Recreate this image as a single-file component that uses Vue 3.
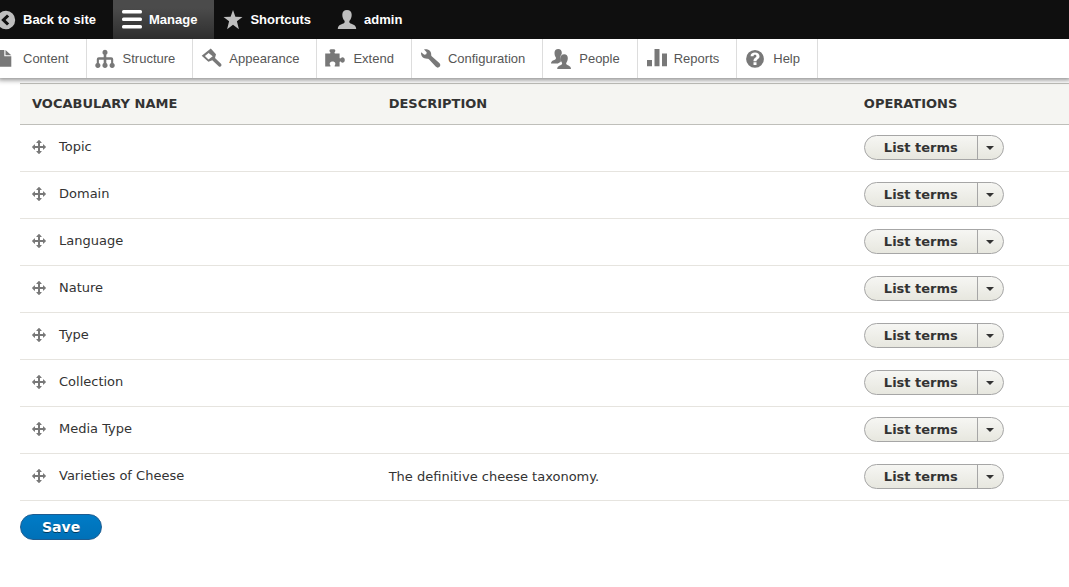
<script setup>
const bar = [
  { label: 'Back to site', icon: 'back' },
  { label: 'Manage', icon: 'menu', active: true },
  { label: 'Shortcuts', icon: 'star' },
  { label: 'admin', icon: 'person' }
]

const tray = [
  { label: 'Content', icon: 'file' },
  { label: 'Structure', icon: 'tree' },
  { label: 'Appearance', icon: 'brush' },
  { label: 'Extend', icon: 'puzzle' },
  { label: 'Configuration', icon: 'wrench' },
  { label: 'People', icon: 'people' },
  { label: 'Reports', icon: 'chart' },
  { label: 'Help', icon: 'help' }
]

const icons = {
  back: 'M10 .8a9.2 9.2 0 1 0 0 18.4a9.2 9.2 0 1 0 0-18.4zM11 4.4l2.2 2.2L9.6 10l3.6 3.4-2.2 2.2L5.2 10z',
  menu: 'M1.5 0h17a1.5 1.5 0 0 1 1.5 1.5v.6a1.5 1.5 0 0 1-1.5 1.5h-17A1.5 1.5 0 0 1 0 2.1v-.6A1.5 1.5 0 0 1 1.5 0zM1.5 7.5h17a1.5 1.5 0 0 1 1.5 1.5v.6a1.5 1.5 0 0 1-1.5 1.5h-17A1.5 1.5 0 0 1 0 9.6V9a1.5 1.5 0 0 1 1.5-1.5zM1.5 15h17a1.5 1.5 0 0 1 1.5 1.5v.6a1.5 1.5 0 0 1-1.5 1.5h-17A1.5 1.5 0 0 1 0 17.1v-.6A1.5 1.5 0 0 1 1.5 15z',
  star: 'M10 0l2.4 6.7 7.1.2-5.6 4.4 2 7.9-5.9-4.4-5.9 4.4 2-7.9L.5 6.900l7.100-.2z',
  person: 'M10 0c3 0 4.700 2 4.700 4.800 0 2.300-.8 4.400-2 5.800-.5.7-.6 1.800.2 2.500 1.300 1.200 6.300 1.400 6.300 5.900H.8c0-4.500 5-4.700 6.300-5.900.8-.7.7-1.800.2-2.500-1.200-1.400-2-3.500-2-5.800C5.300 2 7 0 10 0z',
  file: 'M3 1h6.300v6.200h7v10.600H3zM10.500 1l5.800 5.200h-5.800z',
  tree: 'M10 .8a2.700 2.700 0 0 1 1.300 5v2.500h4.900a2 2 0 0 1 2 2v3.800a2.600 2.600 0 1 1-2.100 0v-3.400h-4.800v3.400a2.600 2.600 0 1 1-2.600 0v-3.400H3.900v3.400a2.600 2.600 0 1 1-2.100 0v-3.800a2 2 0 0 1 2-2h4.900V5.800A2.700 2.700 0 0 1 10 .8z',
  brush: 'M9.800-.4l5.200 5.600-1 3.700 6 5.900c1.200 1.300.1 3.300-1.800 2.900L11.300 11.200l-3.900 1.500L.7 6.700zM7.600 3.900L3.900 6.900l3.600 3.500 4.200-3.200z',
  puzzle: 'M.2 4.400h4.600c.8 0 .9-.9.2-1.400C4 1.900 4.400.2 6 .2h2.800c1.700 0 2 1.700 1 2.800-.6.6-.4 1.400.4 1.400h4.400v4.300c0 .9.8 1 1.400.3 1.200-1.300 3.800-.7 3.800 2s-2.600 3.300-3.800 2c-.6-.7-1.400-.5-1.400.3v4.300h-4.300c-.8 0-.9-.8-.4-1.400 1.100-1.300.3-3.600-2.300-3.600s-3.600 2.300-2.400 3.600c.6.6.4 1.400-.5 1.400H.2z',
  wrench: 'M1.100 3.300l3.200 2.500 2-.5.400-2L4 .5C7.600-.8 11.500 1.700 11.200 5.500c-.1.700 0 1.200.5 1.700l7.600 6.900c1.300 1.300 1.300 2.600.3 3.700-1.100 1.100-2.600 1.100-3.700 0l-7-7.500c-.5-.5-1.100-.5-1.800-.5C3.300 9.800.5 7 1.100 3.300z',
  people: 'M7.200 0c2.300 0 3.600 1.400 3.600 3.700 0 .7-.1 1.200-.4 1.800-1 1.100-1.300 2.800-.9 4.700.2 1.100.6 1.800.2 2.500-.5.7-1.700 1-2.800 1.800H0c.1-3.200 3.500-3.300 4.600-4.300.6-.6.4-1.500 0-2.100C3.900 7 3.500 5.500 3.500 3.700 3.500 1.400 4.900 0 7.200 0zM13.200 5.200c2.300 0 3.600 1.500 3.600 3.700 0 1.800-.5 3.400-1.300 4.500-.4.5-.5 1.500.1 2 1.200 1.100 4.400 1.100 4.400 4.600H6.200c0-3.500 3.300-3.500 4.500-4.600.6-.5.5-1.500.1-2-.8-1.100-1.300-2.700-1.300-4.500 0-2.200 1.400-3.700 3.700-3.700z',
  chart: 'M1 11h5v6.300H1zM8.500 0h5v17.300h-5zM16 4.500h5v12.800h-5z',
  help: 'M10 1a8.900 8.900 0 1 0 0 17.800A8.900 8.900 0 1 0 10 1zM8.500 13.200h3v2.700h-3zM5.600 7.300C5.600 4.700 7.300 3.500 10 3.500s4.500 1.400 4.500 3.700c0 2.900-3 2.900-3 5h-3c0-3.500 2.900-3.500 2.900-5 0-1-.6-1.400-1.400-1.400S8.500 6.300 8.500 7.300z'
}

const move = 'M14.904 7.753l-2.373-2.372c-.291-.292-.529-.193-.529.22v1.399h-3v-3h1.398c.413 0 .512-.239.220-.529l-2.372-2.373c-.137-.136-.36-.136-.495 0l-2.372 2.373c-.292.29-.193.529.220.529h1.398v3h-3v-1.369c0-.413-.239-.511-.529-.22l-2.372 2.372c-.136.136-.136.359 0 .494l2.372 2.372c.291.292.529.193.529-.221v-1.428h3v3h-1.398c-.413 0-.512.239-.22.529l2.373 2.372c.136.137.359.137.495 0l2.372-2.372c.292-.29.193-.529-.22-.529h-1.398v-3h3v1.4c0 .413.238.511.529.22l2.373-2.372c.137-.136.137-.359 0-.495z'

const rows = [
  { name: 'Topic' },
  { name: 'Domain' },
  { name: 'Language' },
  { name: 'Nature' },
  { name: 'Type' },
  { name: 'Collection' },
  { name: 'Media Type' },
  { name: 'Varieties of Cheese', description: 'The definitive cheese taxonomy.' }
]
</script>

<template>
  <div class="page">
    <header class="toolbar">
      <nav class="bar" aria-label="Toolbar">
        <a v-for="item in bar" :key="item.label" href="#" :class="{ active: item.active }">
          <svg viewBox="0 0 20 20" aria-hidden="true"><path :d="icons[item.icon]" fill-rule="evenodd" /></svg>
          <span>{{ item.label }}</span>
        </a>
      </nav>
      <nav class="tray" aria-label="Administration">
        <a v-for="item in tray" :key="item.label" href="#">
          <svg viewBox="0 0 20 20" aria-hidden="true"><path :d="icons[item.icon]" fill-rule="evenodd" /></svg>
          <span>{{ item.label }}</span>
        </a>
      </nav>
    </header>

    <main>
      <form @submit.prevent>
        <table>
          <colgroup>
            <col class="col-name" />
            <col class="col-description" />
            <col />
          </colgroup>
          <thead>
            <tr>
              <th scope="col">VOCABULARY NAME</th>
              <th scope="col">DESCRIPTION</th>
              <th scope="col">OPERATIONS</th>
            </tr>
          </thead>
          <tbody>
            <tr v-for="row in rows" :key="row.name">
              <td>
                <div class="name">
                  <a href="#" class="handle" :aria-label="'Move ' + row.name">
                    <svg viewBox="0 0 16 16" aria-hidden="true"><path :d="move" /></svg>
                  </a>
                  <span>{{ row.name }}</span>
                </div>
              </td>
              <td>{{ row.description }}</td>
              <td>
                <div class="dropbutton">
                  <button type="button" class="action">List terms</button>
                  <button type="button" class="toggle" :aria-label="'More actions for ' + row.name">
                    <i></i>
                  </button>
                </div>
              </td>
            </tr>
          </tbody>
        </table>
        <button type="submit" class="save">Save</button>
      </form>
    </main>
  </div>
</template>

<style>
body {
  background: #fff;
}
</style>

<style scoped>
.page {
  overflow: hidden;
  color: #333;
  font: 13px/20px "DejaVu Sans", sans-serif;
}

.toolbar {
  position: relative;
  font-family: "Liberation Sans", Arial, sans-serif;
  line-height: 15px;
  box-shadow: 0 0 5px 2px rgba(0, 0, 0, 0.45);
}

.bar,
.tray {
  display: flex;
  height: 39px;
}

.bar {
  background: #0f0f0f;
}

.tray {
  background: #fff;
}

.bar a,
.tray a {
  display: flex;
  flex: none;
  align-items: center;
  color: #565656;
  text-decoration: none;
}

.bar a:first-child,
.tray a:first-child {
  margin-left: -13px;
}

.bar a {
  gap: 7px;
  padding: 0 17px 0 9px;
  color: #fff;
  font-weight: 700;
}

.bar a.active {
  background: linear-gradient(rgba(255, 255, 255, 0.25) 20%, rgba(255, 255, 255, 0.13));
}

.tray a {
  gap: 8px;
  padding: 0 17px 0 8px;
  border-right: 1px solid #ddd;
}

.bar svg,
.tray svg {
  width: 20px;
  height: 20px;
  overflow: visible;
}

.bar svg {
  fill: #bebebe;
}

.bar .active svg {
  fill: #fff;
}

.tray svg {
  fill: #787878;
}

main {
  padding: 5px 0 40px 20px;
}

table {
  width: 100%;
  table-layout: fixed;
  border-collapse: separate;
  border-spacing: 0;
}

.col-name {
  width: 34%;
}

.col-description {
  width: 45.3%;
}

th {
  height: 40px;
  padding: 0 12px;
  border-top: 1px solid #bfbfba;
  border-bottom: 1px solid #bfbfba;
  background: #f5f5f2;
  text-align: left;
  font-weight: 700;
}

td {
  height: 46px;
  padding: 0 12px;
  border-bottom: 1px solid #e6e4df;
}

.name {
  display: flex;
  align-items: center;
  gap: 12px;
  padding-bottom: 2px;
}

.handle {
  display: flex;
  margin-left: -1px;
}

.handle svg {
  width: 16px;
  height: 16px;
  fill: #787878;
}

.dropbutton {
  display: flex;
  width: 140px;
  height: 25px;
  box-sizing: border-box;
  margin-bottom: 1px;
  overflow: hidden;
  border: 1px solid #a6a6a6;
  border-radius: 13px;
  background: linear-gradient(#f6f6f3, #e7e7df);
}

.dropbutton button {
  padding: 0;
  border: 0;
  background: none;
  color: #333;
  font: 700 13px/23px "DejaVu Sans", sans-serif;
}

.dropbutton .action {
  flex: 1;
}

.dropbutton .toggle {
  display: flex;
  align-items: center;
  justify-content: center;
  width: 26px;
  border-left: 1px solid #a6a6a6;
}

.toggle i {
  border: 4px solid transparent;
  border-top-color: #333;
  border-bottom: 0;
}

.save {
  height: 26px;
  margin-top: 13px;
  padding: 0 21px;
  border: 1px solid #1e5c90;
  border-radius: 20px;
  background: linear-gradient(#007bc6, #0071b8);
  color: #fff;
  font: 700 14px/24px "DejaVu Sans", sans-serif;
  text-shadow: 0 1px rgba(0, 0, 0, 0.5);
}
</style>
